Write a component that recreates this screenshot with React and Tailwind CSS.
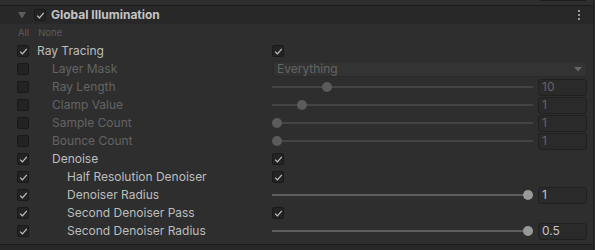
import React from "react";

const rows = [
  { label: "Ray Tracing", indent: 0, on: true, kind: "check", value: true },
  { label: "Layer Mask", indent: 1, on: false, kind: "dropdown", value: "Everything" },
  { label: "Ray Length", indent: 1, on: false, kind: "slider", pos: 0.2, value: "10" },
  { label: "Clamp Value", indent: 1, on: false, kind: "slider", pos: 0.1, value: "1" },
  { label: "Sample Count", indent: 1, on: false, kind: "slider", pos: 0, value: "1" },
  { label: "Bounce Count", indent: 1, on: false, kind: "slider", pos: 0, value: "1" },
  { label: "Denoise", indent: 1, on: true, kind: "check", value: true },
  { label: "Half Resolution Denoiser", indent: 2, on: true, kind: "check", value: true },
  { label: "Denoiser Radius", indent: 2, on: true, kind: "slider", pos: 1, value: "1" },
  { label: "Second Denoiser Pass", indent: 2, on: true, kind: "check", value: true },
  { label: "Second Denoiser Radius", indent: 2, on: true, kind: "slider", pos: 1, value: "0.5" },
];

function Check({ checked, dim }) {
  return (
    <div className="w-[12px] h-[12px] rounded-[2px] bg-[#232323] border border-[#191919] flex items-center justify-center">
      {checked && (
        <svg width="9" height="9" viewBox="0 0 9 9">
          <path d="M1.2 4.6 L3.4 6.8 L7.8 1.8" fill="none" stroke={dim ? "#6a6a6a" : "#c4c4c4"} strokeWidth="1.2" />
        </svg>
      )}
    </div>
  );
}

function Slider({ pos, value, on }) {
  return (
    <div className="flex items-center w-full">
      <div className="relative w-[261px] h-[10px] flex items-center">
        <div className={`w-full h-[2px] ${on ? "bg-[#5e5e5e]" : "bg-[#444444]"}`} />
        <div
          className={`absolute top-0 w-[10px] h-[10px] rounded-full ${on ? "bg-[#999999]" : "bg-[#5b5b5b]"}`}
          style={{ left: `${pos * 251}px` }}
        />
      </div>
      <div className={`ml-[5px] w-[49px] h-[17px] rounded-[3px] bg-[#2a2a2a] border border-[#202020] pl-[3px] flex items-center text-[12px] ${on ? "text-[#c4c4c4]" : "text-[#646464]"}`}>
        {value}
      </div>
    </div>
  );
}

export default function App() {
  return (
    <div className="w-[595px] h-[250px] bg-[#282828] overflow-hidden flex" style={{ fontFamily: "Inter, 'Noto Sans', sans-serif" }}>
      <div className="w-[593px] flex flex-col">
        {/* strip above */}
        <div className="h-[5px] bg-[#2e2e2e] flex justify-end pr-[7px]">
          <div className="w-[46px] h-[1px] bg-[#1c1c1c]" />
        </div>
        <div className="h-[1px] bg-[#1a1a1a]" />

        {/* header */}
        <div className="h-[18px] bg-[#282828] flex items-center relative">
          <svg className="ml-[18px]" width="8" height="7" viewBox="0 0 8 7">
            <path d="M0 0 H8 L4 6.5 Z" fill="#5d5d5d" />
          </svg>
          <div className="ml-[8px]">
            <Check checked />
          </div>
          <span className="ml-[5px] text-[12px] font-bold text-[#c4c4c4] leading-none">Global Illumination</span>
          <div className="absolute right-[13px] top-[4px] flex flex-col gap-[2px]">
            <div className="w-[2px] h-[2px] bg-[#9a9a9a]" />
            <div className="w-[2px] h-[2px] bg-[#9a9a9a]" />
            <div className="w-[2px] h-[2px] bg-[#9a9a9a]" />
          </div>
        </div>

        <div className="bg-[#2e2e2e] flex-1 flex flex-col">
          {/* All / None */}
          <div className="h-[18px] flex items-center pl-[18px] gap-[9px] text-[9.5px] text-[#5c5c5c]">
            <span>All</span>
            <span>None</span>
          </div>

          {rows.map((r) => (
            <div key={r.label} className="h-[18px] flex items-center">
              <div className="ml-[17px] w-[12px]">
                <Check checked={r.on} />
              </div>
              <span
                className={`text-[12px] leading-none ${r.on ? "text-[#bdbdbd]" : "text-[#646464]"} ${
                  r.indent === 0 ? "ml-[8px] w-[235px]" : r.indent === 1 ? "ml-[23px] w-[220px]" : "ml-[38px] w-[205px]"
                }`}
              >
                {r.label}
              </span>
              <div className="w-[315px] flex items-center">
                {r.kind === "check" && <Check checked={r.value} />}
                {r.kind === "dropdown" && (
                  <div className="ml-[1px] w-[314px] h-[16px] rounded-[3px] bg-[#333333] border border-[#2a2a2a] flex items-center justify-between pl-[3px] pr-[4px] text-[12px] text-[#646464]">
                    <span>{r.value}</span>
                    <svg width="8" height="5" viewBox="0 0 8 5">
                      <path d="M0 0 H8 L4 4.5 Z" fill="#666666" />
                    </svg>
                  </div>
                )}
                {r.kind === "slider" && <Slider pos={r.pos} value={r.value} on={r.on} />}
              </div>
            </div>
          ))}
          <div className="h-[3px]" />
        </div>
        <div className="h-[1px] bg-[#1c1c1c]" />
        <div className="h-[5px] bg-[#282828]" />
      </div>
      <div className="w-[1px] bg-[#1e1e1e]" />
      <div className="w-[1px] bg-[#2e2e2e]" />
    </div>
  );
}
